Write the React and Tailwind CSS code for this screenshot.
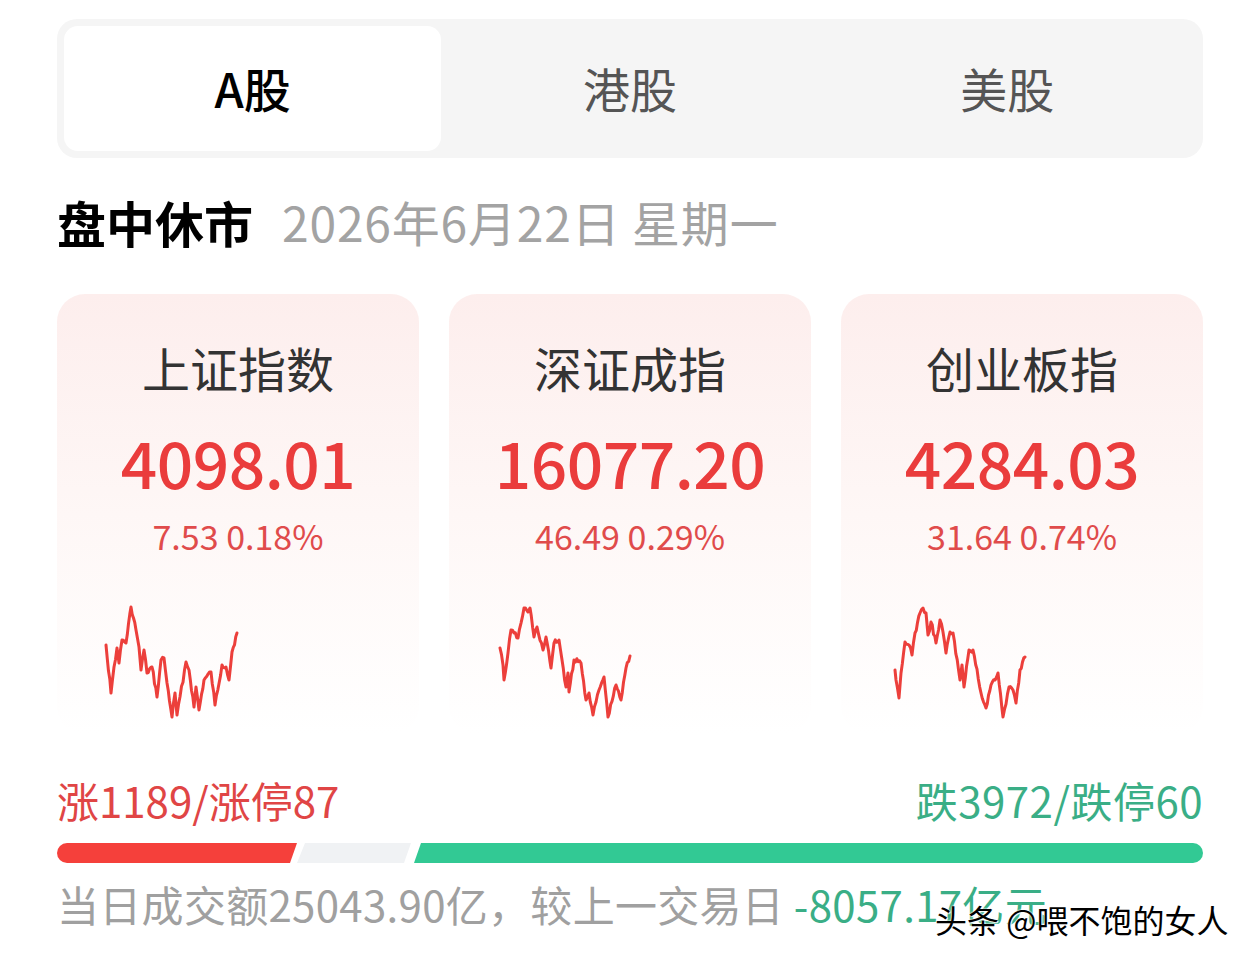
import React from 'react';

const FONT = { fontFamily: '"Noto Sans CJK SC", "Noto Sans", sans-serif' };

// 关键点（相对于 svg 原点），中间用伪随机抖动补齐
const CHARTS = [
  [[7,45],[12,93],[15,67],[18,48],[20,63],[23,40],[27,43],[32,7],[37,30],[40,47],[42,70],[45,50],[48,73],[53,67],[58,97],[62,60],[65,58],[68,83],[73,117],[76,93],[78,115],[87,62],[90,70],[95,107],[97,87],[100,110],[105,80],[112,72],[116,105],[123,65],[127,67],[130,80],[133,52],[138,33]],
  [[9,48],[12,65],[13,80],[17,53],[20,30],[23,33],[27,38],[33,8],[37,12],[39,8],[43,37],[46,27],[52,50],[55,37],[60,68],[63,43],[68,40],[75,87],[77,73],[78,92],[83,60],[90,63],[95,100],[98,93],[102,115],[108,90],[113,77],[117,117],[125,85],[130,100],[135,68],[139,56]],
  [[12,70],[13,80],[16,98],[18,73],[22,42],[26,45],[29,55],[32,33],[37,13],[40,8],[43,13],[45,35],[48,22],[53,43],[57,20],[60,32],[63,53],[67,32],[70,33],[77,80],[79,65],[81,87],[86,50],[90,50],[98,93],[103,108],[108,85],[115,73],[120,117],[126,87],[130,90],[133,103],[137,70],[142,57]],
];

function buildPath(points, seed) {
  let s = seed;
  const rnd = () => {
    s = (s * 9301 + 49297) % 233280;
    return s / 233280;
  };
  const out = [];
  for (let i = 0; i < points.length - 1; i++) {
    const [x1, y1] = points[i];
    const [x2, y2] = points[i + 1];
    const steps = Math.max(1, Math.round((x2 - x1) / 1.4));
    for (let k = 0; k < steps; k++) {
      const t = k / steps;
      const jitter = k === 0 ? 0 : (rnd() - 0.5) * 5;
      out.push([x1 + (x2 - x1) * t, y1 + (y2 - y1) * t + jitter]);
    }
  }
  out.push(points[points.length - 1]);
  return out.map((p, i) => `${i ? 'L' : 'M'}${p[0].toFixed(1)} ${p[1].toFixed(1)}`).join(' ');
}

function Sparkline({ points, seed }) {
  return (
    <svg width="150" height="125" viewBox="0 0 150 125" className="overflow-visible">
      <path d={buildPath(points, seed)} fill="none" stroke="#ec3f3b" strokeWidth="3" strokeLinejoin="round" strokeLinecap="round" />
    </svg>
  );
}

const INDEXES = [
  { name: '上证指数', value: '4098.01', change: '7.53 0.18%' },
  { name: '深证成指', value: '16077.20', change: '46.49 0.29%' },
  { name: '创业板指', value: '4284.03', change: '31.64 0.74%' },
];

function IndexCard({ item, idx }) {
  return (
    <div className="flex flex-col items-center h-[440px] rounded-[28px] bg-gradient-to-b from-[#fdeeed] via-[#fef7f6] to-white">
      <div className="mt-[49px] text-[48px] leading-none text-[#333]">{item.name}</div>
      <div className="mt-[38px] text-[64px] leading-none font-medium text-[#ea3c3c] tracking-[-0.5px]">{item.value}</div>
      <div className="mt-[26px] text-[34px] leading-none text-[#e04b4b]">{item.change}</div>
      <div className="self-start ml-[42px] mt-[47px]">
        <Sparkline points={CHARTS[idx]} seed={17 + idx * 31} />
      </div>
    </div>
  );
}

export default function App() {
  return (
    <div className="w-[1260px] h-[965px] bg-white relative overflow-hidden" style={FONT}>
      <div className="px-[57px] pt-[19px]">
        {/* tabs */}
        <div className="grid grid-cols-3 h-[139px] rounded-[20px] bg-[#f5f5f5] p-[7px]">
          <div className="flex items-center justify-center rounded-[14px] bg-white text-[47px] text-black font-medium">A股</div>
          <div className="flex items-center justify-center text-[47px] text-[#555]">港股</div>
          <div className="flex items-center justify-center text-[47px] text-[#555]">美股</div>
        </div>

        {/* title */}
        <div className="flex items-center mt-[35px] h-[56px]">
          <span className="text-[49px] font-bold text-black leading-none">盘中休市</span>
          <span className="ml-[29px] text-[48px] text-[#a3a3a3] leading-none tracking-[0.8px]">2026年6月22日 星期一</span>
        </div>

        {/* cards */}
        <div className="grid grid-cols-3 gap-[30px] mt-[45px]">
          {INDEXES.map((it, i) => (
            <IndexCard key={it.name} item={it} idx={i} />
          ))}
        </div>

        {/* breadth */}
        <div className="flex justify-between items-center mt-[41px] h-[50px] text-[42px] leading-none">
          <span className="text-[#e04545]">涨1189/涨停87</span>
          <span className="text-[#3aae86] tracking-[0.5px]">跌3972/跌停60</span>
        </div>
        <div className="flex h-[20px] mt-[18px]">
          <div className="w-[240px] h-full bg-[#f5403b] rounded-l-full [clip-path:polygon(0_0,100%_0,calc(100%-7px)_100%,0_100%)]" />
          <div className="w-[114px] h-full bg-[#f0f2f4] [clip-path:polygon(8px_0,100%_0,calc(100%-7px)_100%,0_100%)]" />
          <div className="flex-1 h-full ml-[3px] bg-[#32c994] rounded-r-full [clip-path:polygon(7px_0,100%_0,100%_100%,0_100%)]" />
        </div>
        <div className="mt-[20px] text-[42px] leading-none text-[#a0a0a0] whitespace-nowrap tracking-[0.3px]">
          当日成交额25043.90亿，较上一交易日 <span className="text-[#3aae86]">-8057.17亿元</span>
        </div>
      </div>

      {/* watermark */}
      <div className="absolute left-[935px] top-[903px] text-[32px] leading-none text-black whitespace-nowrap [text-shadow:0_0_2px_#fff,0_0_2px_#fff,1px_1px_1px_#fff]">
        头条 @喂不饱的女人
      </div>
    </div>
  );
}
